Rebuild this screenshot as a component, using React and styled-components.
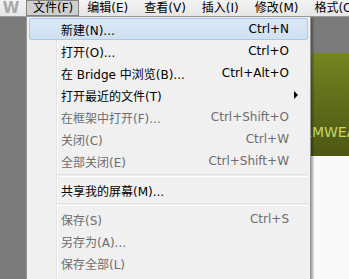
import React from "react";
import styled, { createGlobalStyle } from "styled-components";

const GlobalStyle = createGlobalStyle`
  html, body {
    margin: 0;
    padding: 0;
    background: #7b7b7b;
  }
  body {
    font-family: "DejaVu Sans", "Noto Sans CJK SC", sans-serif;
    font-size: 12px;
  }
`;

const Screen = styled.div`
  width: 349px;
  height: 279px;
  position: relative;
  overflow: hidden;
  background: #7b7b7b;
  display: flex;
  flex-direction: column;
`;

const MenuBar = styled.div`
  height: 16px;
  flex-shrink: 0;
  display: flex;
  align-items: stretch;
  background: linear-gradient(#f3f3f3, #e6e6e6);
  border-bottom: 1px solid #9a9a9a;
  white-space: nowrap;
  overflow: hidden;
`;

const Logo = styled.div`
  width: 26px;
  flex-shrink: 0;
  display: flex;
  align-items: center;
  justify-content: center;
  font-family: "DejaVu Sans", sans-serif;
  font-weight: bold;
  font-size: 15px;
  color: #a9a9a9;
  padding-right: 4px;
  box-sizing: border-box;
`;

const BarItem = styled.div`
  flex-shrink: 0;
  display: flex;
  align-items: center;
  color: #000;
  line-height: 16px;
  box-sizing: border-box;
  border: 1px solid ${p => (p.active ? "#828282" : "transparent")};
  background: ${p => (p.active ? "#cfcfcf" : "transparent")};
  padding-left: ${p => (p.active ? "6px" : "7px")};
  padding-right: ${p => (p.active ? "5px" : "7px")};
`;

const Workspace = styled.div`
  flex: 1;
  display: flex;
  padding-top: 36px;
  padding-left: 200px;
`;

const Document = styled.div`
  flex: 1;
  display: flex;
  flex-direction: column;
`;

const Banner = styled.div`
  height: 103px;
  background: linear-gradient(#748520, #5b6818 60%, #4d5714);
  display: flex;
  align-items: flex-end;
  padding: 0 0 16px 73px;
  box-sizing: border-box;
`;

const BannerTitle = styled.div`
  font-family: "DejaVu Sans", sans-serif;
  font-size: 14px;
  color: #c4d66a;
  white-space: nowrap;
`;

const Page = styled.div`
  flex: 1;
  background: #f9f9f9;
`;

const Menu = styled.div`
  position: absolute;
  left: 26px;
  top: 16px;
  width: 285px;
  height: 280px;
  box-sizing: border-box;
  border: 1px solid #979797;
  padding: 1px 0;
  background:
    linear-gradient(to right,
      transparent 29px, #e2e3e3 29px, #e2e3e3 30px,
      #ffffff 30px, #ffffff 31px, transparent 31px),
    #f0f0f0;
  box-shadow: 2px 2px 2px rgba(0, 0, 0, 0.35);
`;

const Item = styled.div`
  height: 22px;
  margin: 0 2px;
  box-sizing: border-box;
  display: grid;
  grid-template-columns: 1fr auto 18px;
  align-items: center;
  padding-left: 32px;
  border: 1px solid ${p => (p.hover ? "#a9c8ec" : "transparent")};
  border-radius: 2px;
  background: ${p => (p.hover ? "linear-gradient(#dbe8f6, #cfe0f2)" : "transparent")};
  color: ${p => (p.disabled ? "#6d6d6d" : "#000")};
  white-space: nowrap;
`;

const Label = styled.span`
  margin-left: -1px;
`;

const Shortcut = styled.span`
  text-align: right;
`;

const Arrow = styled.span`
  width: 0;
  height: 0;
  margin-left: 5px;
  border-top: 4px solid transparent;
  border-bottom: 4px solid transparent;
  border-left: 4px solid #000;
`;

const Separator = styled.div`
  height: 7px;
  display: flex;
  align-items: center;
  margin: 0 2px 0 30px;
  &::after {
    content: "";
    flex: 1;
    height: 1px;
    border-top: 1px solid #e0e0e0;
    border-bottom: 1px solid #ffffff;
  }
`;

const barItems = ["文件(F)", "编辑(E)", "查看(V)", "插入(I)", "修改(M)", "格式(O)"];

const menu = [
  { label: "新建(N)...", key: "Ctrl+N", hover: true },
  { label: "打开(O)...", key: "Ctrl+O" },
  { label: "在 Bridge 中浏览(B)...", key: "Ctrl+Alt+O" },
  { label: "打开最近的文件(T)", sub: true },
  { label: "在框架中打开(F)...", key: "Ctrl+Shift+O", disabled: true },
  { label: "关闭(C)", key: "Ctrl+W", disabled: true },
  { label: "全部关闭(E)", key: "Ctrl+Shift+W", disabled: true },
  { sep: true },
  { label: "共享我的屏幕(M)..." },
  { sep: true },
  { label: "保存(S)", key: "Ctrl+S", disabled: true },
  { label: "另存为(A)...", disabled: true },
  { label: "保存全部(L)", disabled: true },
];

export default function App() {
  return (
    <Screen>
      <GlobalStyle />
      <MenuBar>
        <Logo>W</Logo>
        {barItems.map((t, i) => (
          <BarItem key={t} active={i === 0}>
            {t}
          </BarItem>
        ))}
      </MenuBar>
      <Workspace>
        <Document>
          <Banner>
            <BannerTitle>DREAMWEAVER</BannerTitle>
          </Banner>
          <Page />
        </Document>
      </Workspace>
      <Menu>
        {menu.map((m, i) =>
          m.sep ? (
            <Separator key={i} />
          ) : (
            <Item key={i} hover={m.hover} disabled={m.disabled}>
              <Label>{m.label}</Label>
              <Shortcut>{m.key}</Shortcut>
              {m.sub ? <Arrow /> : <span />}
            </Item>
          )
        )}
      </Menu>
    </Screen>
  );
}
